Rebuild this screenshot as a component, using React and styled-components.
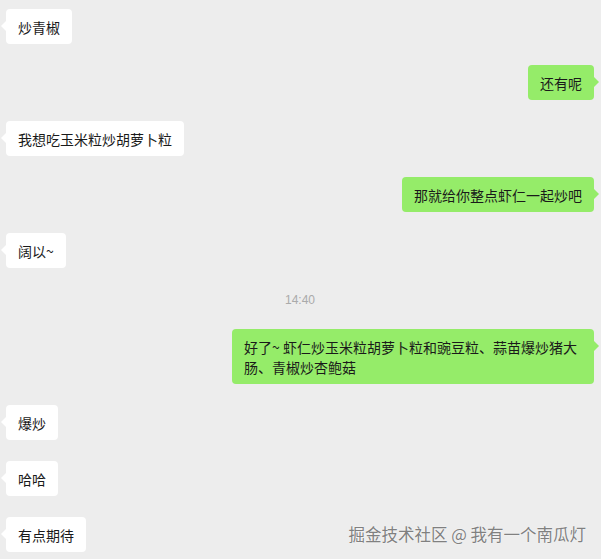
import styled, { createGlobalStyle } from 'styled-components';

const GlobalStyle = createGlobalStyle`
  html, body {
    margin: 0;
    padding: 0;
    background: #ededed;
  }
  body {
    font-family: "Noto Sans CJK SC", "Liberation Sans", sans-serif;
  }
`;

const ChatWindow = styled.div`
  position: relative;
  width: 601px;
  height: 559px;
  background: #ededed;
  overflow: hidden;
  box-sizing: border-box;
  padding: 9px 7px 0 6px;
  display: flex;
  flex-direction: column;
  gap: 21px;
`;

const Row = styled.div`
  display: flex;
  justify-content: ${(p) => (p.$mine ? 'flex-end' : 'flex-start')};
`;

const Bubble = styled.div`
  position: relative;
  max-width: 362px;
  box-sizing: border-box;
  padding: 7.5px 12px;
  border-radius: 4px;
  background: ${(p) => (p.$mine ? '#95ec69' : '#ffffff')};
  color: #1a1a1a;
  font-size: 14px;
  line-height: 20px;
  word-break: break-all;

  &::before {
    content: '';
    position: absolute;
    top: 12px;
    ${(p) => (p.$mine ? 'right: -5px;' : 'left: -5px;')}
    border-top: 5px solid transparent;
    border-bottom: 5px solid transparent;
    ${(p) =>
      p.$mine
        ? 'border-left: 5px solid #95ec69;'
        : 'border-right: 5px solid #ffffff;'}
  }
`;

const TimeStamp = styled.div`
  height: 19px;
  box-sizing: border-box;
  padding-top: 3px;
  text-align: center;
  font-family: "Liberation Sans", "Noto Sans", sans-serif;
  font-size: 12px;
  line-height: 16px;
  color: #aaaaaa;
`;

const Watermark = styled.div`
  position: absolute;
  right: 15px;
  bottom: 15px;
  font-size: 16.5px;
  line-height: 20px;
  color: #808080;
  text-shadow: 0 0 1px rgba(255, 255, 255, 0.9), 0 0 2px rgba(255, 255, 255, 0.6);
  white-space: nowrap;
`;

const messages = [
  { id: 1, text: '炒青椒' },
  { id: 2, text: '还有呢', mine: true },
  { id: 3, text: '我想吃玉米粒炒胡萝卜粒' },
  { id: 4, text: '那就给你整点虾仁一起炒吧', mine: true },
  { id: 5, text: '阔以~' },
  { id: 6, time: '14:40' },
  { id: 7, text: '好了~ 虾仁炒玉米粒胡萝卜粒和豌豆粒、蒜苗爆炒猪大肠、青椒炒杏鲍菇', mine: true },
  { id: 8, text: '爆炒' },
  { id: 9, text: '哈哈' },
  { id: 10, text: '有点期待' },
];

const App = () => {
  return (
    <>
      <GlobalStyle />
      <ChatWindow>
        {messages.map((m) =>
          m.time ? (
            <TimeStamp key={m.id}>{m.time}</TimeStamp>
          ) : (
            <Row key={m.id} $mine={m.mine}>
              <Bubble $mine={m.mine}>{m.text}</Bubble>
            </Row>
          )
        )}
        <Watermark>掘金技术社区 @ 我有一个南瓜灯</Watermark>
      </ChatWindow>
    </>
  );
};

export default App;
